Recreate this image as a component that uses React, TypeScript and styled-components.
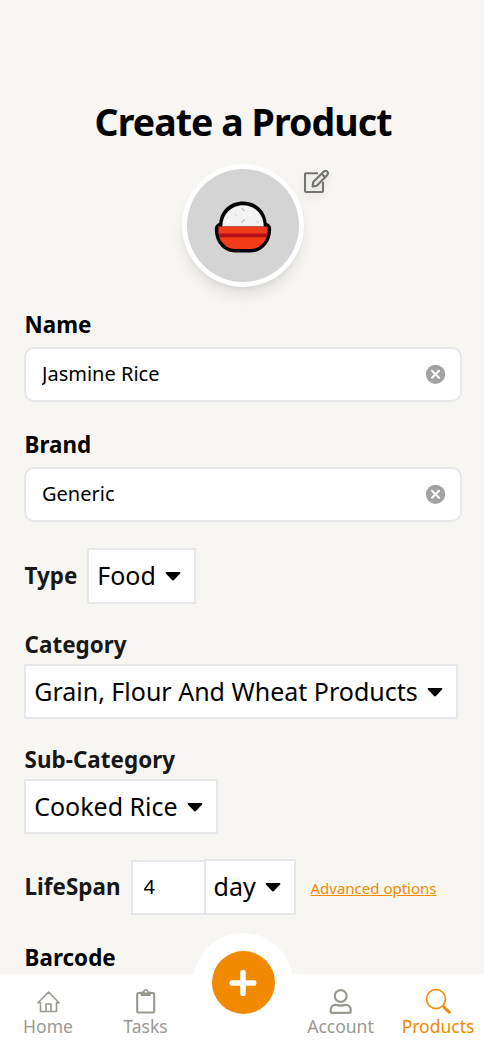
import React from "react";
import styled, { createGlobalStyle } from "styled-components";

const GlobalStyle = createGlobalStyle`
  *, *::before, *::after { box-sizing: border-box; }
  body {
    margin: 0;
    background: #f7f6f2;
    color: #000;
    font-family: "Noto Sans", sans-serif;
  }
  button, input { font-family: inherit; color: inherit; }
`;

const Screen = styled.div`
  display: flex;
  flex-direction: column;
  height: 1050px;
  overflow: hidden;
`;

const Content = styled.main`
  flex: 1;
  min-height: 0;
  padding: 98px 22px 0 24px;
`;

const Title = styled.h1`
  margin: 0;
  font-size: 37.5px;
  line-height: 48px;
  font-weight: 700;
  letter-spacing: -0.94px;
  text-align: center;
`;

const AvatarRow = styled.div`
  display: flex;
  align-items: flex-start;
  margin: 18px 0 0 158px;
`;

const Avatar = styled.div`
  display: flex;
  align-items: center;
  justify-content: center;
  width: 122px;
  height: 123px;
  padding-top: 2px;
  border: 5px solid #fff;
  border-radius: 50%;
  background: #d4d4d4;
  box-shadow: 0 10px 15px -3px rgba(0, 0, 0, 0.1), 0 4px 6px -4px rgba(0, 0, 0, 0.1);
`;

const EditButton = styled.button`
  display: flex;
  padding: 0;
  margin-top: 5px;
  border: 0;
  background: none;
  color: #737373;
  filter: drop-shadow(0 4px 3px rgba(0, 0, 0, 0.1));
`;

const Field = styled.div<{ $top: number; $labelGap?: number }>`
  display: flex;
  flex-direction: column;
  align-items: flex-start;
  margin-top: ${(p) => p.$top}px;
  > label { margin-bottom: ${(p) => p.$labelGap ?? 0}px; }
`;

const InlineField = styled.div<{ $top: number }>`
  display: flex;
  align-items: center;
  margin-top: ${(p) => p.$top}px;
  height: 56px;
`;

const Label = styled.label<{ $soft?: boolean }>`
  padding-left: 0.5px;
  font-size: 22.4px;
  line-height: 30px;
  font-weight: 700;
  letter-spacing: 0.05px;
  white-space: nowrap;
  color: ${(p) => (p.$soft ? "#171717" : "#000")};
`;

const InputBox = styled.div`
  display: flex;
  align-items: center;
  width: 438px;
  height: 55px;
  padding: 0 15px 2px 16px;
  border: 2px solid #e5e7eb;
  border-radius: 10px;
  background: #fff;
`;

const TextInput = styled.input`
  flex: 1;
  min-width: 0;
  padding: 0;
  border: 0;
  outline: 0;
  background: none;
  font-size: 20px;
`;

const NumberBox = styled.input`
  flex: none;
  width: 75px;
  height: 55px;
  margin: 1px 0 0;
  padding: 0 10px 2px 10.5px;
  border: 2px solid #e5e7eb;
  outline: 0;
  background: #fff;
  font-size: 20px;
`;

const LabelSlot = styled.div<{ $width: number }>`
  display: flex;
  flex: none;
  width: ${(p) => p.$width}px;
  padding-bottom: 1px;
`;

const SelectButton = styled.button<{ $width: number; $height?: number; $left?: number }>`
  display: flex;
  flex: none;
  align-items: center;
  justify-content: space-between;
  width: ${(p) => p.$width}px;
  height: ${(p) => p.$height ?? 55}px;
  margin: 0 0 0 ${(p) => p.$left ?? 0}px;
  padding: 0 13px 2px 8.2px;
  border: 2px solid #e5e7eb;
  background: #fff;
  font-size: 25px;
  white-space: nowrap;
  svg { flex: none; margin-top: 3px; }
`;

const UnitSelect = styled(SelectButton)`
  padding-left: 7.5px;
`;

const Advanced = styled.a`
  margin: 1px 0 0 14.5px;
  color: #f18a00;
  font-size: 15px;
  line-height: 20px;
  text-decoration: underline;
`;

const NavBar = styled.nav`
  position: relative;
  display: flex;
  flex: none;
  height: 76px;
  background: #fff;
`;

const NavItem = styled.a<{ $active?: boolean; $width: number }>`
  display: flex;
  flex: none;
  flex-direction: column;
  align-items: center;
  width: ${(p) => p.$width}px;
  padding-top: 14px;
  font-size: 17.5px;
  line-height: 24px;
  color: ${(p) => (p.$active ? "#f18a00" : "#99998f")};
  svg { flex: none; }
`;

const AddHalo = styled.div`
  position: absolute;
  top: -41px;
  left: 193px;
  display: flex;
  align-items: center;
  justify-content: center;
  width: 100px;
  height: 100px;
  padding-bottom: 1px;
  border-radius: 50%;
  background: #fff;
`;

const AddButton = styled.button`
  display: flex;
  align-items: center;
  justify-content: center;
  width: 63px;
  height: 63px;
  padding: 0;
  border: 0;
  border-radius: 50%;
  background: #f18a00;
`;

const NavGap = styled.div`
  flex: none;
  width: 97px;
`;

const RiceBowl = () => (
  <svg width="58" height="52" viewBox="0 0 58 52">
    <path
      d="M5.300 22C6.300 9.500 16 .5 29 .5s22.700 9 23.700 21.500c2.700.8 4.500 3 4.500 5.800C57.200 42 48 51.500 36.500 51.500h-15C10 51.500.8 42 .8 27.800c0-2.800 1.800-5 4.500-5.800z"
      fill="#000"
    />
    <path d="M8.300 25.500C8.300 13 17.500 4.200 29 4.200s20.700 8.800 20.700 21.300z" fill="#f2f2f2" />
    <path d="M4.400 25.500h49.200V31c-.5 9.500-8 17-17 17H21.400c-9 0-16.500-7.500-17-17z" fill="#f23b19" />
    <path d="M4.500 32.500h49l-.8 3.700H5.300z" fill="#b5101e" />
    <g strokeWidth="1.600">
      <path d="M27.500 7l3.200 3M27.500 21.500l3.200-3" stroke="#c4c4c4" />
      <path d="M20.500 12.500l3 3M42 19.500l3 3" stroke="#dedede" />
      <path d="M35 15.500l3-3M13.500 19.500l3 3" stroke="#fff" />
    </g>
  </svg>
);

const EditIcon = () => (
  <svg width="26" height="25" viewBox="0 0 26 25" fill="none" stroke="currentColor" strokeWidth="2.100" strokeLinejoin="round">
    <path d="M14 4.200H2Q1 4.200 1 5.200V22q0 1 1 1h16q1 0 1-1v-9" />
    <path d="M8.600 17.500l.6-4.400L19.600 2.700c1.100-1.100 2.600-1.100 3.600-.1s1 2.500-.1 3.600L12.800 16.700z" />
    <path d="M17.600 4.700l3.600 3.600" />
  </svg>
);

const ClearIcon = () => (
  <svg width="20" height="20" viewBox="0 0 20 20">
    <circle cx="10.500" cy="10.300" r="9.600" fill="#a3a3a3" />
    <path d="M7 6.800l7 7M14 6.800l-7 7" stroke="#fff" strokeWidth="2.100" strokeLinecap="round" />
  </svg>
);

const Caret = () => (
  <svg width="16" height="9" viewBox="0 0 16 9">
    <path d="M1.500 0h13c.9 0 1.200.8.6 1.400L9.200 7.800c-.7.8-1.700.8-2.400 0L.9 1.400C.3.800.6 0 1.500 0z" fill="#000" />
  </svg>
);

const HomeIcon = () => (
  <svg width="26" height="26" viewBox="0 0 26 26" fill="none" stroke="currentColor" strokeWidth="1.600" strokeLinejoin="round" strokeLinecap="round">
    <path d="M3 14.800L13.500 4 24 14.800h-2.500V23.500h-16v-8.700z" />
    <path d="M11 23v-7h5v7" />
  </svg>
);

const TasksIcon = () => (
  <svg width="20" height="26" viewBox="0 0 20 26" fill="none" stroke="currentColor" strokeWidth="2.100">
    <rect x="1.200" y="5" width="17" height="19.500" rx="1.200" />
    <path d="M4.800 3.500h2.300a2.600 2.600 0 0 1 5.200 0h2.300V8H4.800z" fill="currentColor" stroke="none" />
    <circle cx="9.700" cy="3.700" r="1.100" fill="#fff" stroke="none" />
  </svg>
);

const AccountIcon = () => (
  <svg width="24" height="26" viewBox="0 0 24 26" fill="none" stroke="currentColor" strokeWidth="2.200">
    <circle cx="11.700" cy="8" r="5.900" />
    <path d="M3.200 24.800h17c.9 0 1.500-.6 1.500-1.500V21.800c0-3-2-5-4.600-5-1.700 0-2.700.9-5.400.9s-3.700-.9-5.400-.9c-2.600 0-4.600 2-4.600 5v1.500c0 .9.600 1.500 1.500 1.500z" />
  </svg>
);

const SearchIcon = () => (
  <svg width="26" height="26" viewBox="0 0 26 26" fill="none" stroke="currentColor">
    <circle cx="11" cy="11" r="9.500" strokeWidth="1.600" />
    <path d="M17.700 17.700l1.500 1.500" strokeWidth="1.500" />
    <path d="M19.200 19.200l5 5" strokeWidth="3" strokeLinecap="round" />
  </svg>
);

const PlusIcon = () => (
  <svg width="28" height="28" viewBox="0 0 28 28" fill="#fff">
    <rect x="11.200" y="1" width="5.600" height="26" rx="2" />
    <rect x=".6" y="11.200" width="26.800" height="5.600" rx="2" />
  </svg>
);

export default function App() {
  return (
    <Screen>
      <GlobalStyle />
      <Content>
        <Title>Create a Product</Title>
        <AvatarRow>
          <Avatar><RiceBowl /></Avatar>
          <EditButton aria-label="Edit picture"><EditIcon /></EditButton>
        </AvatarRow>

        <Field $top={23} $labelGap={7}>
          <Label htmlFor="name">Name</Label>
          <InputBox>
            <TextInput id="name" defaultValue="Jasmine Rice" />
            <ClearIcon />
          </InputBox>
        </Field>
        <Field $top={28} $labelGap={7}>
          <Label htmlFor="brand">Brand</Label>
          <InputBox>
            <TextInput id="brand" defaultValue="Generic" />
            <ClearIcon />
          </InputBox>
        </Field>

        <InlineField $top={26}>
          <LabelSlot $width={63}><Label $soft>Type</Label></LabelSlot>
          <SelectButton $width={109} $height={56}>Food<Caret /></SelectButton>
        </InlineField>
        <Field $top={26} $labelGap={4}>
          <Label $soft>Category</Label>
          <SelectButton $width={434}>Grain, Flour And Wheat Products<Caret /></SelectButton>
        </Field>
        <Field $top={26} $labelGap={4}>
          <Label $soft>Sub-Category</Label>
          <SelectButton $width={194}>Cooked Rice<Caret /></SelectButton>
        </Field>
        <InlineField $top={25}>
          <LabelSlot $width={107}><Label $soft htmlFor="lifespan">LifeSpan</Label></LabelSlot>
          <NumberBox id="lifespan" defaultValue="4" />
          <UnitSelect $width={92} $height={56} $left={-2}>day<Caret /></UnitSelect>
          <Advanced>Advanced options</Advanced>
        </InlineField>
        <Field $top={28}>
          <Label>Barcode</Label>
        </Field>
      </Content>

      <NavBar>
        <NavItem $width={96}><HomeIcon />Home</NavItem>
        <NavItem $width={99}><TasksIcon />Tasks</NavItem>
        <NavGap />
        <NavItem $width={97}><AccountIcon />Account</NavItem>
        <NavItem $width={98} $active><SearchIcon />Products</NavItem>
        <AddHalo>
          <AddButton aria-label="Add"><PlusIcon /></AddButton>
        </AddHalo>
      </NavBar>
    </Screen>
  );
}
